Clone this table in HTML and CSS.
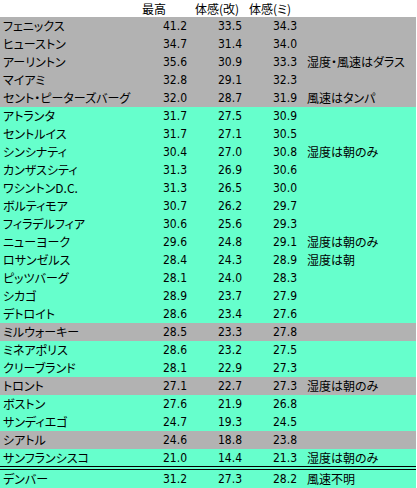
FILE: index.html
```html
<!DOCTYPE html>
<html lang="ja">
<head>
<meta charset="utf-8">
<link rel="stylesheet" href="styles.css">
</head>
<body>
<div class="sheet">
  <div class="row head">
    <div class="name"></div>
    <div class="h1">最高</div>
    <div class="h2">体感(改)</div>
    <div class="h3">体感(ミ)</div>
    <div class="note"></div>
  </div>
  <div class="row gray"><div class="name">フェニックス</div><div class="num">41.2</div><div class="num">33.5</div><div class="num">34.3</div><div class="note"></div></div>
  <div class="row gray"><div class="name">ヒューストン</div><div class="num">34.7</div><div class="num">31.4</div><div class="num">34.0</div><div class="note"></div></div>
  <div class="row gray"><div class="name">アーリントン</div><div class="num">35.6</div><div class="num">30.9</div><div class="num">33.3</div><div class="note">湿度・風速はダラス</div></div>
  <div class="row gray"><div class="name">マイアミ</div><div class="num">32.8</div><div class="num">29.1</div><div class="num">32.3</div><div class="note"></div></div>
  <div class="row gray"><div class="name">セント・ピーターズバーグ</div><div class="num">32.0</div><div class="num">28.7</div><div class="num">31.9</div><div class="note">風速はタンパ</div></div>
  <div class="row green"><div class="name">アトランタ</div><div class="num">31.7</div><div class="num">27.5</div><div class="num">30.9</div><div class="note"></div></div>
  <div class="row green"><div class="name">セントルイス</div><div class="num">31.7</div><div class="num">27.1</div><div class="num">30.5</div><div class="note"></div></div>
  <div class="row green"><div class="name">シンシナティ</div><div class="num">30.4</div><div class="num">27.0</div><div class="num">30.8</div><div class="note">湿度は朝のみ</div></div>
  <div class="row green"><div class="name">カンザスシティ</div><div class="num">31.3</div><div class="num">26.9</div><div class="num">30.6</div><div class="note"></div></div>
  <div class="row green"><div class="name">ワシントンD.C.</div><div class="num">31.3</div><div class="num">26.5</div><div class="num">30.0</div><div class="note"></div></div>
  <div class="row green"><div class="name">ボルティモア</div><div class="num">30.7</div><div class="num">26.2</div><div class="num">29.7</div><div class="note"></div></div>
  <div class="row green"><div class="name">フィラデルフィア</div><div class="num">30.6</div><div class="num">25.6</div><div class="num">29.3</div><div class="note"></div></div>
  <div class="row green"><div class="name">ニューヨーク</div><div class="num">29.6</div><div class="num">24.8</div><div class="num">29.1</div><div class="note">湿度は朝のみ</div></div>
  <div class="row green"><div class="name">ロサンゼルス</div><div class="num">28.4</div><div class="num">24.3</div><div class="num">28.9</div><div class="note">湿度は朝</div></div>
  <div class="row green"><div class="name">ピッツバーグ</div><div class="num">28.1</div><div class="num">24.0</div><div class="num">28.3</div><div class="note"></div></div>
  <div class="row green"><div class="name">シカゴ</div><div class="num">28.9</div><div class="num">23.7</div><div class="num">27.9</div><div class="note"></div></div>
  <div class="row green"><div class="name">デトロイト</div><div class="num">28.6</div><div class="num">23.4</div><div class="num">27.6</div><div class="note"></div></div>
  <div class="row gray"><div class="name">ミルウォーキー</div><div class="num">28.5</div><div class="num">23.3</div><div class="num">27.8</div><div class="note"></div></div>
  <div class="row green"><div class="name">ミネアポリス</div><div class="num">28.6</div><div class="num">23.2</div><div class="num">27.5</div><div class="note"></div></div>
  <div class="row green"><div class="name">クリーブランド</div><div class="num">28.1</div><div class="num">22.9</div><div class="num">27.3</div><div class="note"></div></div>
  <div class="row gray"><div class="name">トロント</div><div class="num">27.1</div><div class="num">22.7</div><div class="num">27.3</div><div class="note">湿度は朝のみ</div></div>
  <div class="row green"><div class="name">ボストン</div><div class="num">27.6</div><div class="num">21.9</div><div class="num">26.8</div><div class="note"></div></div>
  <div class="row green"><div class="name">サンディエゴ</div><div class="num">24.7</div><div class="num">19.3</div><div class="num">24.5</div><div class="note"></div></div>
  <div class="row gray"><div class="name">シアトル</div><div class="num">24.6</div><div class="num">18.8</div><div class="num">23.8</div><div class="note"></div></div>
  <div class="row green last"><div class="name">サンフランシスコ</div><div class="num">21.0</div><div class="num">14.4</div><div class="num">21.3</div><div class="note">湿度は朝のみ</div></div>
  <div class="row green"><div class="name">デンバー</div><div class="num">31.2</div><div class="num">27.3</div><div class="num">28.2</div><div class="note">風速不明</div></div>
</div>
</body>
</html>
```
FILE: styles.css
```css
html, body {
  margin: 0;
  padding: 0;
  background: #ffffff;
}
.sheet {
  width: 416px;
  font-family: "Noto Sans CJK JP", "Noto Sans", sans-serif;
  font-size: 12px;
  font-feature-settings: "palt";
  color: #000;
}
.row {
  display: grid;
  grid-template-columns: 130px 57px 55px 55px 1fr;
  height: 18px;
  line-height: 18px;
  white-space: nowrap;
  overflow: hidden;
}
.row.head {
  height: 17px;
  line-height: 17px;
  background: #ffffff;
}
.gray { background: #b2b2b2; }
.green { background: #66ffcc; }
.row.last {
  height: 21px;
  border-bottom: 4px double #000;
  box-sizing: border-box;
}
.name {
  padding-left: 3px;
}
.num {
  text-align: right;
  font-family: "Liberation Sans Narrow", "DejaVu Sans Condensed", "Liberation Sans", sans-serif;
  font-size: 12px;
  font-feature-settings: normal;
}
.h1 { padding-left: 12px; }
.h2 { padding-left: 8px; }
.h3 { padding-left: 7px; }
.note {
  padding-left: 10px;
}
```
